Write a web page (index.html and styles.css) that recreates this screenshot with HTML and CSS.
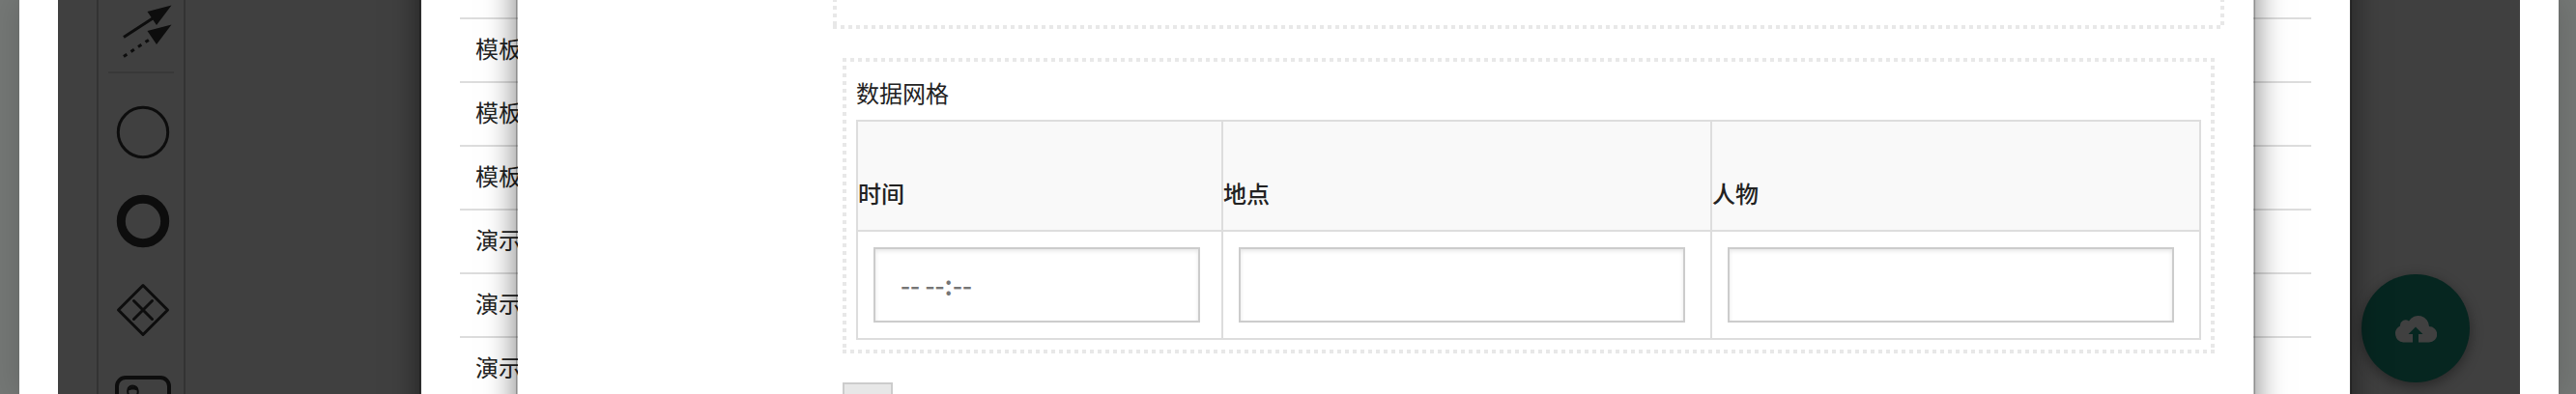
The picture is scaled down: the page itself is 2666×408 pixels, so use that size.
FILE: index.html
```html
<!DOCTYPE html>
<html lang="zh-CN">
<head>
<meta charset="utf-8">
<title>数据网格</title>
<link rel="stylesheet" href="styles.css">
</head>
<body>
<div class="window">
  <main class="canvas">
    <nav class="palette" aria-label="工具">
      <button class="tool" type="button" aria-label="连线">
        <svg viewBox="0 0 64 64"><path d="M14 38.500 44 19" class="line solid"/><path d="M14 58.500 42 40" class="line dotted"/><path d="M38.500 12 63.500 5.500 48 26zM38.500 32 63.500 25.500 48 46z" class="fill"/></svg>
      </button>
      <hr class="rule">
      <button class="tool" type="button" aria-label="开始事件"><svg viewBox="0 0 64 64"><circle cx="32" cy="32" r="25.700" class="line"/></svg></button>
      <button class="tool" type="button" aria-label="结束事件"><svg viewBox="0 0 64 64"><circle cx="32" cy="32" r="22.700" class="line thick"/></svg></button>
      <button class="tool" type="button" aria-label="网关"><svg viewBox="0 0 64 64"><path d="M32 6.500 57.500 32 32 57.500 6.500 32zM22.500 22.500l19 19M41.500 22.500l-19 19" class="line"/></svg></button>
      <button class="tool" type="button" aria-label="用户任务"><svg viewBox="0 0 64 64"><rect x="5" y="10" width="54" height="42" rx="9" class="line task"/><path d="M12 38c0-6 3-7 7-8-4-3-4-11 2-11.500 7 .5 7 8.500 3 11.500 4 1 7 2 7 8z" class="line thin"/><path d="M16 24c1-6 10-6 11 0-3-2-8-2-11 0z" class="fill"/></svg></button>
    </nav>
    <button class="upload" type="button" aria-label="上传">
      <svg viewBox="0 0 44 29"><path d="M9.200 28.500A9 9 0 0 1 6 11.500 5.600 5.600 0 0 1 15 6.500 11.300 11.300 0 0 1 36 12 8.200 8.200 0 0 1 36 28.500H25V20h4.500L22 12.500 14.500 20H19v8.500z"/></svg>
    </button>
  </main>
</div>

<section class="dialog list-dialog" aria-label="模板列表">
  <ul class="list">
    <li>模板</li><li>模板</li><li>模板</li><li>演示</li><li>演示</li><li>演示</li>
  </ul>
</section>

<section class="dialog form-dialog" aria-label="表单">
  <form class="form">
    <div class="drop-zone dots"></div>
    <div class="grid-field dots">
      <div class="label" id="grid-label">数据网格</div>
      <table class="grid" aria-labelledby="grid-label">
        <colgroup><col class="col-time"><col class="col-text"><col class="col-text"></colgroup>
        <thead><tr>
          <th><label for="time">时间</label></th>
          <th><label for="place">地点</label></th>
          <th><label for="person">人物</label></th>
        </tr></thead>
        <tbody><tr>
          <td class="time-cell"><input id="time" type="text" placeholder="--&#8201;--:--"></td>
          <td><input id="place" type="text"></td>
          <td><input id="person" type="text"></td>
        </tr></tbody>
      </table>
    </div>
    <button class="action" type="button" aria-label="操作"></button>
  </form>
</section>
</body>
</html>
```
FILE: styles.css
```css
* { box-sizing: border-box; }

body {
  position: relative;
  height: 100vh;
  margin: 0;
  overflow: hidden;
  background: #747775;
  color: #222;
  font: 24px/36px "Noto Sans CJK SC", sans-serif;
}

.window {
  height: 100%;
  margin: 0 18px 0 20px;
  padding: 0 40px;
  background: #fff;
  box-shadow: 0 0 30px rgba(0, 0, 0, .15);
}

.canvas {
  position: relative;
  height: 100%;
  padding-left: 40px;
  overflow: hidden;
  background: #404040;
}

.palette {
  display: flex;
  flex-direction: column;
  width: 92px;
  height: 100%;
  border: solid #333;
  border-width: 0 2px;
}

.tool {
  display: grid;
  flex: none;
  place-items: center;
  height: 92px;
  padding: 0;
  border: 0;
  background: none;
}

.tool:first-child {
  height: 74px;
  place-items: start center;
}

.tool svg {
  width: 64px;
  height: 64px;
}

.tool:not(:first-child) svg { margin-right: -4px; }

.rule {
  width: 68px;
  margin: 0 0 15px 10px;
  border: 0;
  border-top: 2px solid #383838;
}

.line {
  fill: none;
  stroke: #0d0d0d;
  stroke-width: 3;
  stroke-linecap: round;
  stroke-linejoin: round;
}

.solid { stroke-linecap: butt; }
.dotted { stroke-linecap: butt; stroke-dasharray: 4 5; }
.thick { stroke-width: 9; }
.task { stroke-width: 4; }
.thin { stroke-width: 2; }
.fill { fill: #0d0d0d; }

.upload {
  position: absolute;
  right: 52px;
  bottom: 12px;
  display: grid;
  place-items: center;
  width: 112px;
  height: 112px;
  padding: 0;
  border: 0;
  border-radius: 50%;
  background: #062620;
  box-shadow: 0 4px 14px rgba(0, 0, 0, .4);
}

.upload svg {
  width: 44px;
  fill: #404040;
}

.dialog {
  position: absolute;
  top: -60px;
  bottom: -60px;
  background: #fff;
  background-clip: padding-box;
  border: 2px solid rgba(0, 0, 0, .25);
  box-shadow: 0 10px 30px rgba(0, 0, 0, .5);
}

.list-dialog {
  right: 232px;
  left: 434px;
  padding: 76px 40px 0;
}

.list {
  margin: 0;
  padding: 0;
  list-style: none;
}

.list li {
  height: 66px;
  padding: 12px 16px;
  border-top: 2px solid #ddd;
}

.form-dialog {
  right: 332px;
  left: 534px;
  padding: 0 30px 0 326px;
}

/* Square 4px dots on all four edges */
.dots {
  --across: repeating-linear-gradient(90deg, #e8e8e8 0 4px, transparent 4px 8px);
  --down: repeating-linear-gradient(#e8e8e8 0 4px, transparent 4px 8px);
  background:
    var(--across) top / 100% 4px no-repeat,
    var(--across) bottom / 100% 4px no-repeat,
    var(--down) left / 4px 100% no-repeat,
    var(--down) right / 4px 100% no-repeat;
}

.drop-zone { height: 88px; }

.grid-field {
  margin: 30px 10px;
  padding: 18px 14px 14px;
}

.label { padding-bottom: 10px; }

.grid {
  width: 100%;
  border-collapse: collapse;
  table-layout: fixed;
}

.col-time { width: 378px; }

.grid th,
.grid td {
  border: 2px solid #ddd;
  padding: 0;
}

.grid th {
  height: 114px;
  padding-bottom: 20px;
  background: #f9f9f9;
  font-weight: 500;
  text-align: left;
  vertical-align: bottom;
}

.grid td { padding: 16px 26px 16px 16px; }
.grid .time-cell { padding-right: 22px; }

.grid input {
  display: block;
  width: 100%;
  height: 78px;
  padding: 0 26px 2px;
  border: 2px solid #ccc;
  background: #fff;
  box-shadow: inset 0 2px 4px rgba(0, 0, 0, .1);
  font: 500 28px/36px "Noto Sans CJK SC", sans-serif;
}

.grid input::placeholder { color: #757575; opacity: 1; }

.action {
  display: block;
  width: 52px;
  height: 60px;
  margin-left: 10px;
  border: 2px solid #ccc;
  background: #e7e7e7;
}
```
